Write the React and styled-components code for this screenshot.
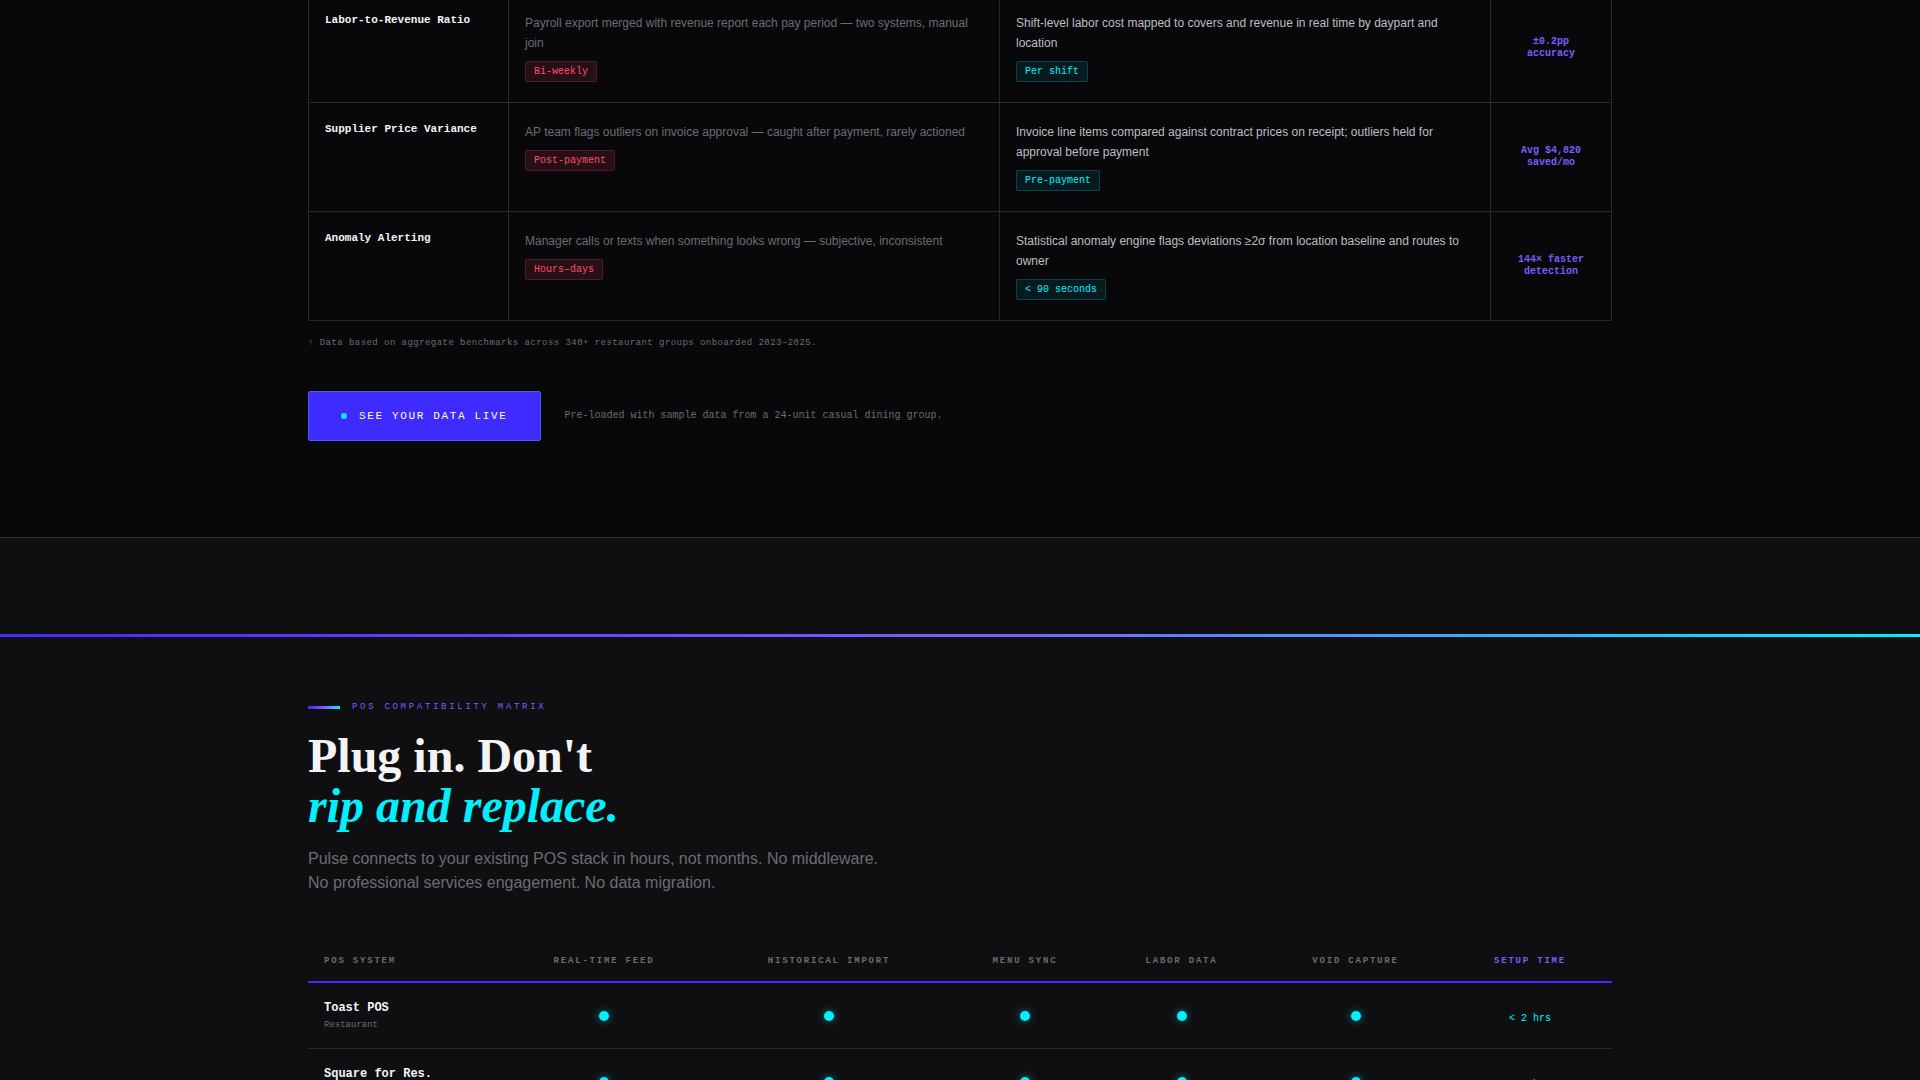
import React from "react";
import styled, { createGlobalStyle } from "styled-components";

const GlobalStyle = createGlobalStyle`
  * {
    box-sizing: border-box;
  }

  body {
    margin: 0;
    background: #08080a;
    color: #f4f4f6;
    font-family: "Liberation Sans", Arial, sans-serif;
  }
`;

const mono = `"Liberation Mono", "Courier New", monospace`;

const Page = styled.main`
  height: 100vh;
  overflow: hidden;
`;

const Container = styled.div`
  max-width: 1400px;
  margin: 0 auto;
  padding: 0 48px;
`;

/* ---------- comparison ---------- */

const Compare = styled.section`
  padding-bottom: 96px;
  margin-top: -6px;
`;

const CompareTable = styled.table`
  width: 100%;
  table-layout: fixed;
  border-collapse: separate;
  border-spacing: 0;
  border: 1px solid #2a2a2e;
  border-top: 0;
  border-radius: 2px;

  th,
  td {
    height: 109px;
    padding: 19px 16px 16px;
    border-right: 1px solid #2a2a2e;
    border-bottom: 1px solid #2a2a2e;
    text-align: left;
    vertical-align: top;
  }

  th {
    padding-top: 18px;
  }

  th:last-child,
  td:last-child {
    border-right: 0;
  }

  tr:last-child > * {
    height: 108px;
    border-bottom: 0;
  }
`;

const Metric = styled.th`
  font-family: ${mono};
  font-size: 11px;
  font-weight: 700;
  line-height: 16px;
`;

const Approach = styled.td`
  font-size: 12px;
  line-height: 20px;
  color: ${(p) => (p.$ours ? "#bdbdc2" : "#6b6b75")};
`;

const Tag = styled.span`
  display: block;
  width: fit-content;
  margin-top: 8px;
  padding: 2px 8px;
  border: 1px solid ${(p) => (p.$good ? "rgba(0, 240, 255, 0.2)" : "rgba(255, 77, 109, 0.2)")};
  border-radius: 2px;
  background: ${(p) => (p.$good ? "rgba(0, 240, 255, 0.08)" : "rgba(255, 77, 109, 0.12)")};
  color: ${(p) => (p.$good ? "#00f0ff" : "#ff4d6d")};
  font-family: ${mono};
  font-size: 10px;
  line-height: 15px;
`;

const Delta = styled.td`
  && {
    padding: 17px 16px;
    text-align: center;
    vertical-align: middle;
  }
  font-family: ${mono};
  font-size: 10px;
  font-weight: 700;
  line-height: 12px;
  color: #7b5cff;
`;

const Footnote = styled.p`
  margin: 17px 0 0;
  font-family: ${mono};
  font-size: 9px;
  line-height: 11px;
  letter-spacing: 0.05em;
  color: #6b6b75;
`;

const CtaRow = styled.div`
  display: flex;
  align-items: center;
  gap: 24px;
  margin-top: 42px;
`;

const CtaButton = styled.button`
  display: inline-flex;
  align-items: center;
  gap: 12px;
  padding: 18px 32px;
  border: 1px solid #4a5cf0;
  border-radius: 2px;
  background: #3d2bff;
  color: #fff;
  font-family: ${mono};
  font-size: 11px;
  line-height: 12px;
  letter-spacing: 0.15em;
  text-transform: uppercase;
  cursor: pointer;
`;

const LiveDot = styled.span`
  width: 6px;
  height: 6px;
  border-radius: 50%;
  background: #00f0ff;
`;

const CtaNote = styled.span`
  font-family: ${mono};
  font-size: 10px;
  line-height: 12px;
  color: #6b6b75;
`;

/* ---------- compatibility ---------- */

const Compat = styled.section`
  padding: 96px 0;
  border-top: 1px solid #2a2a2e;
  background: #0f0f11;
`;

const Divider = styled.div`
  height: 3px;
  margin-bottom: 64px;
  background: linear-gradient(90deg, #3d2bff, #7b5cff 50%, #00f0ff);
`;

const Eyebrow = styled.div`
  display: flex;
  align-items: center;
  gap: 12px;
  font-family: ${mono};
  font-size: 9px;
  line-height: 12px;
  letter-spacing: 0.3em;
  text-transform: uppercase;
  color: #7b5cff;

  &::before {
    content: "";
    width: 32px;
    height: 3px;
    background: linear-gradient(90deg, #3d2bff, #7b5cff 50%, #00f0ff);
  }
`;

const Title = styled.h2`
  margin: 18px 0 16px;
  font-family: "Liberation Serif", "Times New Roman", serif;
  font-size: 48px;
  font-weight: 700;
  line-height: 50px;

  em {
    display: block;
    color: #00f0ff;
  }
`;

const Lead = styled.p`
  max-width: 580px;
  margin: 0 0 44px;
  font-size: 16px;
  line-height: 24px;
  color: #6b6b75;
`;

const PosTable = styled.table`
  width: 100%;
  table-layout: fixed;
  border-collapse: separate;
  border-spacing: 0;

  th,
  td {
    padding: 16px;
    text-align: center;
  }

  th:first-child {
    text-align: left;
  }

  thead th {
    padding: 17px 16px 15px;
    border-bottom: 2px solid #3d2bff;
    font-family: ${mono};
    font-size: 9px;
    font-weight: 700;
    line-height: 10px;
    letter-spacing: 0.2em;
    text-transform: uppercase;
    white-space: nowrap;
    color: #6b6b75;
  }

  thead th:last-child {
    color: #7b5cff;
  }

  tbody th,
  tbody td {
    height: 66px;
    border-bottom: 1px solid #2a2a2e;
  }
`;

const PosName = styled.span`
  display: block;
  margin-bottom: 1px;
  font-family: ${mono};
  font-size: 12px;
  font-weight: 700;
  line-height: 18px;
  white-space: nowrap;
`;

const PosKind = styled.span`
  display: block;
  font-family: ${mono};
  font-size: 9px;
  font-weight: 400;
  line-height: 14px;
  color: #6b6b75;
`;

const Supported = styled.span`
  display: block;
  width: 10px;
  height: 10px;
  margin: 0 auto;
  border-radius: 50%;
  background: #00f0ff;
  box-shadow: 0 0 8px rgba(0, 240, 255, 0.5);
`;

const Setup = styled.td`
  && {
    padding-top: 22px;
  }
  font-family: ${mono};
  font-size: 10px;
  line-height: 12px;
  color: #00f0ff;
`;

const metrics = [
  {
    name: "Labor-to-Revenue Ratio",
    before: "Payroll export merged with revenue report each pay period — two systems, manual join",
    beforeTag: "Bi-weekly",
    after: "Shift-level labor cost mapped to covers and revenue in real time by daypart and location",
    afterTag: "Per shift",
    delta: "±0.2pp accuracy",
  },
  {
    name: "Supplier Price Variance",
    before: "AP team flags outliers on invoice approval — caught after payment, rarely actioned",
    beforeTag: "Post-payment",
    after: "Invoice line items compared against contract prices on receipt; outliers held for approval before payment",
    afterTag: "Pre-payment",
    delta: "Avg $4,820 saved/mo",
  },
  {
    name: "Anomaly Alerting",
    before: "Manager calls or texts when something looks wrong — subjective, inconsistent",
    beforeTag: "Hours–days",
    after: "Statistical anomaly engine flags deviations ≥2σ from location baseline and routes to owner",
    afterTag: "< 90 seconds",
    delta: "144× faster detection",
  },
];

const features = ["Real-Time Feed", "Historical Import", "Menu Sync", "Labor Data", "Void Capture"];
const posColumns = [192, 208, 242, 150, 163, 185, 164];

const systems = [
  { name: "Toast POS", kind: "Restaurant", setup: "< 2 hrs" },
  { name: "Square for Res.", kind: "Restaurant", setup: "< 2 hrs" },
];

function App() {
  return (
    <Page>
      <GlobalStyle />

      <Compare>
        <Container>
          <CompareTable>
            <colgroup>
              <col width="200" />
              <col />
              <col />
              <col width="120" />
            </colgroup>
            <tbody>
              {metrics.map((m) => (
                <tr key={m.name}>
                  <Metric scope="row">{m.name}</Metric>
                  <Approach>
                    {m.before}
                    <Tag>{m.beforeTag}</Tag>
                  </Approach>
                  <Approach $ours>
                    {m.after}
                    <Tag $good>{m.afterTag}</Tag>
                  </Approach>
                  <Delta>{m.delta}</Delta>
                </tr>
              ))}
            </tbody>
          </CompareTable>
          <Footnote>↑ Data based on aggregate benchmarks across 340+ restaurant groups onboarded 2023–2025.</Footnote>
          <CtaRow>
            <CtaButton type="button">
              <LiveDot />
              See your data live
            </CtaButton>
            <CtaNote>Pre-loaded with sample data from a 24-unit casual dining group.</CtaNote>
          </CtaRow>
        </Container>
      </Compare>

      <Compat>
        <Divider />
        <Container>
          <Eyebrow>POS Compatibility Matrix</Eyebrow>
          <Title>
            Plug in. Don't <em>rip and replace.</em>
          </Title>
          <Lead>
            Pulse connects to your existing POS stack in hours, not months. No middleware. No professional services
            engagement. No data migration.
          </Lead>
          <PosTable>
            <colgroup>
              {posColumns.map((w, i) => (
                <col key={i} width={w} />
              ))}
            </colgroup>
            <thead>
              <tr>
                <th scope="col">POS System</th>
                {features.map((f) => (
                  <th scope="col" key={f}>{f}</th>
                ))}
                <th scope="col">Setup Time</th>
              </tr>
            </thead>
            <tbody>
              {systems.map((s) => (
                <tr key={s.name}>
                  <th scope="row">
                    <PosName>{s.name}</PosName>
                    <PosKind>{s.kind}</PosKind>
                  </th>
                  {features.map((f) => (
                    <td key={f}>
                      <Supported role="img" aria-label="Supported" />
                    </td>
                  ))}
                  <Setup>{s.setup}</Setup>
                </tr>
              ))}
            </tbody>
          </PosTable>
        </Container>
      </Compat>
    </Page>
  );
}

export default App;
